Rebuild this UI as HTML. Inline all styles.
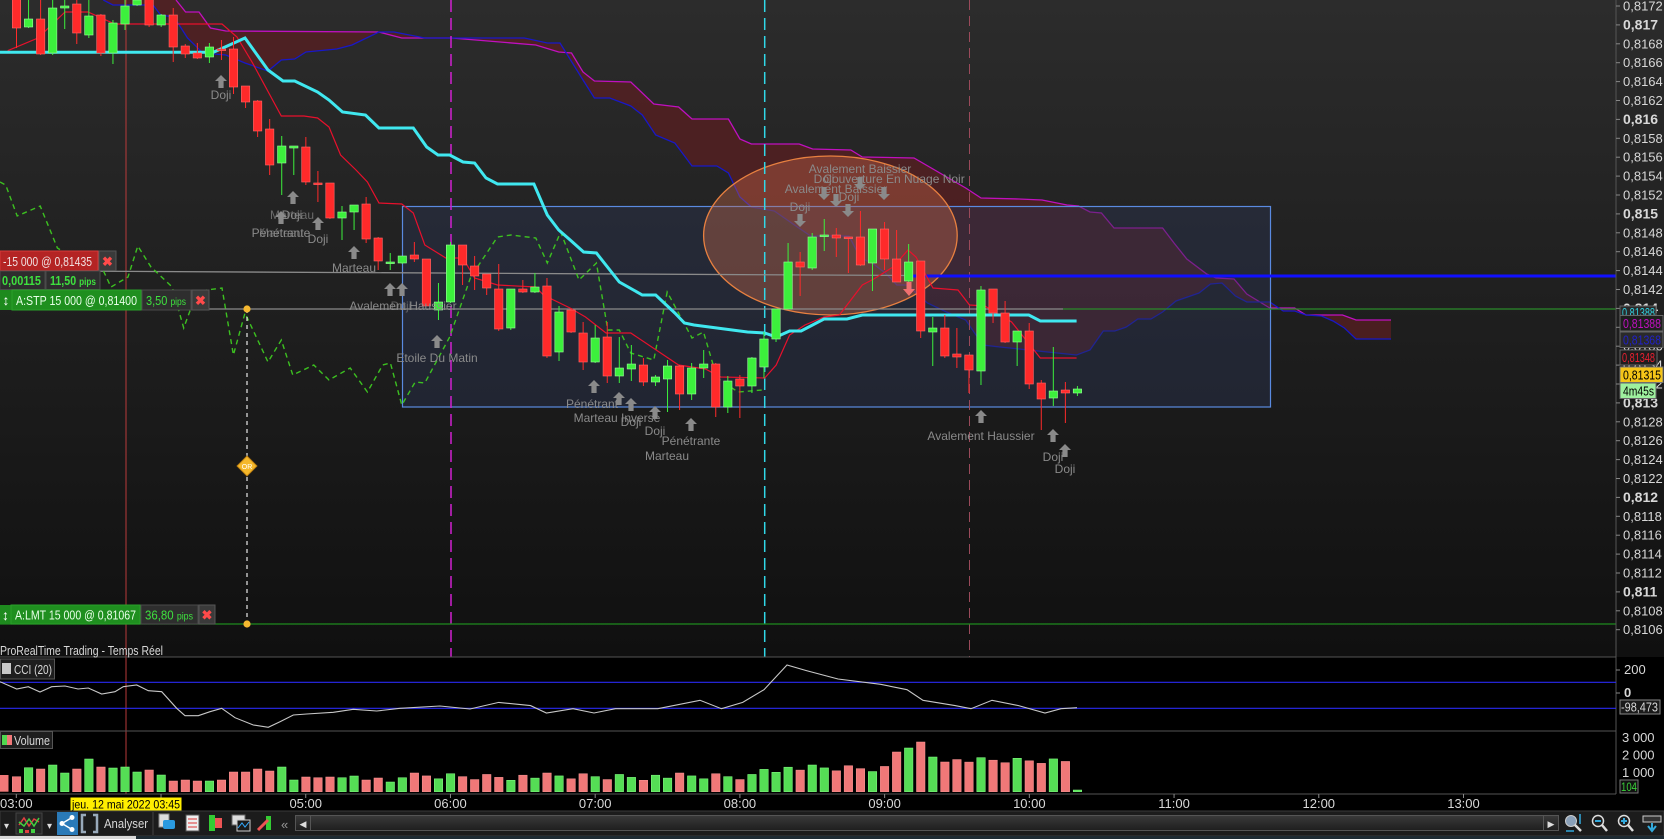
<!DOCTYPE html>
<html><head><meta charset="utf-8"><style>
html,body{margin:0;padding:0;background:#000;overflow:hidden}
svg{display:block}
text{font-family:"Liberation Sans",sans-serif}
</style></head><body>
<svg id="s" width="1664" height="839" viewBox="0 0 1664 839" xmlns="http://www.w3.org/2000/svg">
<defs>
<linearGradient id="bg" x1="0" y1="0" x2="0" y2="1"><stop offset="0" stop-color="#2c2c2c"/><stop offset="1" stop-color="#101010"/></linearGradient>
<linearGradient id="sb" x1="0" y1="0" x2="0" y2="1"><stop offset="0" stop-color="#3a3a3a"/><stop offset="1" stop-color="#1e1e1e"/></linearGradient>
<symbol id="au" viewBox="-7 0 14 14" overflow="visible"><path d="M0,0 L6,6 L2.6,6 L2.6,13 L-2.6,13 L-2.6,6 L-6,6 Z" fill="#8a8a8a"/></symbol>
<symbol id="ad" viewBox="-7 0 14 14" overflow="visible"><path d="M0,13 L6,7 L2.6,7 L2.6,0 L-2.6,0 L-2.6,7 L-6,7 Z" fill="#8a8a8a"/></symbol>
</defs>
<rect x="0" y="0" width="1664" height="657" fill="url(#bg)"/>
<rect x="0" y="657" width="1664" height="153" fill="#000"/>
<polygon id="cloud" fill="#5a1f22" fill-opacity="0.75" points=""/>
<polyline id="mag" fill="none" stroke="#c010c0" stroke-width="1.3" points=""/>
<polyline id="blu" fill="none" stroke="#1818c8" stroke-width="1.3" points=""/>
<rect x="402.5" y="206.5" width="868" height="200.5" fill="#2a3450" fill-opacity="0.45" stroke="#5a8ae0" stroke-width="1.2"/>
<ellipse cx="830.4" cy="235.5" rx="126.8" ry="79.5" fill="#c86a4a" fill-opacity="0.38" stroke="#e88040" stroke-width="1.3"/>
<line x1="126" y1="0" x2="126" y2="794" stroke="#b83a3a" stroke-width="1"/>
<line x1="451" y1="0" x2="451" y2="657" stroke="#d020d0" stroke-width="1.5" stroke-dasharray="12,6"/>
<line x1="764.7" y1="0" x2="764.7" y2="657" stroke="#30d8e8" stroke-width="1.5" stroke-dasharray="12,6"/>
<line x1="969.5" y1="0" x2="969.5" y2="657" stroke="#9a4a5a" stroke-width="1" stroke-dasharray="10,6"/>
<polyline points="0,270.7 909,275.5" stroke="#8a8a8a" stroke-width="1.3" fill="none"/>
<line x1="909" y1="276" x2="1616" y2="276" stroke="#1010ff" stroke-width="3"/>
<line x1="0" y1="309" x2="1063" y2="309" stroke="#8a8a8a" stroke-width="1.2"/>
<line x1="1063" y1="309" x2="1616" y2="309" stroke="#2a8a2a" stroke-width="1.2"/>
<line x1="0" y1="624" x2="1616" y2="624" stroke="#1f8a1f" stroke-width="1.2"/>
<polyline id="chik" fill="none" stroke="#3cc020" stroke-width="1.4" stroke-dasharray="5,4" points=""/>
<polyline id="ten" fill="none" stroke="#e8102c" stroke-width="1.2" points=""/>
<polyline id="kij" fill="none" stroke="#40e8f0" stroke-width="3" points=""/>
<g id="candles"></g>
<line x1="247" y1="309" x2="247" y2="624" stroke="#e8e8e8" stroke-width="1.2" stroke-dasharray="4,4"/>
<circle cx="247" cy="309" r="3.6" fill="#f5b830"/>
<circle cx="247" cy="624" r="3.6" fill="#f5b830"/>
<rect x="240" y="459" width="14" height="14" transform="rotate(45 247 466)" fill="#f5b82a" stroke="#c08010"/>
<text x="247" y="469" font-size="7" fill="#fff" text-anchor="middle">OR</text>
<g font-size="12" fill="#8a8a8a" text-anchor="middle">
<use href="#au" x="214" y="75" width="14" height="14"/><text x="221" y="99">Doji</text>
<use href="#au" x="286" y="191" width="14" height="14"/><text x="292" y="219">Doji</text><text x="292" y="219" fill-opacity="0.7">Marteau</text>
<use href="#au" x="274" y="211" width="14" height="14"/><text x="281" y="237">Pénétrante</text><text x="281" y="237" fill-opacity="0.6">Marteau</text>
<use href="#au" x="311" y="217" width="14" height="14"/><text x="318" y="243">Doji</text>
<use href="#au" x="347" y="246" width="14" height="14"/><text x="354" y="272">Marteau</text>
<use href="#au" x="383" y="283" width="14" height="14"/><use href="#au" x="395" y="283" width="14" height="14"/>
<text x="403" y="310">Avalement Haussier</text><text x="401" y="310" fill-opacity="0.6">Doji</text>
<use href="#au" x="430" y="335" width="14" height="14"/><text x="437" y="362">Etoile Du Matin</text>
<use href="#au" x="587" y="380" width="14" height="14"/><text x="592" y="408">Pénétrant</text>
<use href="#au" x="612" y="392" width="14" height="14"/><use href="#au" x="624" y="398" width="14" height="14"/>
<text x="617" y="422">Marteau Inverse</text><text x="631" y="426">Doji</text>
<use href="#au" x="648" y="406" width="14" height="14"/><text x="655" y="435">Doji</text>
<use href="#au" x="684" y="418" width="14" height="14"/><text x="691" y="445">Pénétrante</text>
<text x="667" y="460">Marteau</text>
<text x="860" y="173">Avalement Baissier</text>
<text x="824" y="183">Doji</text><text x="894" y="183">Couverture En Nuage Noir</text>
<text x="836" y="193">Avalement Baissier</text>
<text x="849" y="201">Doji</text><text x="800" y="211">Doji</text>
<use href="#ad" x="817" y="187" width="14" height="14"/>
<use href="#ad" x="829" y="194" width="14" height="14"/>
<use href="#ad" x="841" y="204" width="14" height="14"/>
<use href="#ad" x="853" y="177" width="14" height="14"/>
<use href="#ad" x="877" y="187" width="14" height="14"/>
<use href="#ad" x="793" y="214" width="14" height="14"/>
<path d="M909,296 L915,289 L911.5,289 L911.5,282 L906.5,282 L906.5,289 L903,289 Z" fill="#f07070"/>
<use href="#au" x="974" y="410" width="14" height="14"/><text x="981" y="440">Avalement Haussier</text>
<use href="#au" x="1046" y="429" width="14" height="14"/><text x="1053" y="461">Doji</text>
<use href="#au" x="1058" y="444" width="14" height="14"/><text x="1065" y="473">Doji</text>
</g>
<g font-size="13">
<rect x="0" y="251" width="98" height="19.5" fill="#b42424" stroke="#d83a3a"/>
<text x="3" y="266" fill="#f0e0e0" textLength="89" lengthAdjust="spacingAndGlyphs">-15 000 @ 0,81435</text>
<rect x="99" y="251" width="17" height="19.5" fill="#3a3a3a" stroke="#555"/>
<text x="107.5" y="266" fill="#ff4a4a" text-anchor="middle" font-weight="bold">✖</text>
<rect x="0" y="271" width="45" height="18.5" fill="#2e2e2e" stroke="#4a4a4a"/>
<text x="2" y="285" fill="#3ee03e" font-weight="bold" textLength="39" lengthAdjust="spacingAndGlyphs">0,00115</text>
<rect x="46" y="271" width="54" height="18.5" fill="#2e2e2e" stroke="#4a4a4a"/>
<text x="50" y="285" fill="#3ee03e" font-weight="bold" textLength="46" lengthAdjust="spacingAndGlyphs">11,50 <tspan font-size="10">pips</tspan></text>
<rect x="0" y="290" width="12" height="20" fill="#1e8a1e"/>
<text x="6" y="305" fill="#fff" text-anchor="middle" font-size="14">↕</text>
<rect x="12" y="290" width="129" height="20" fill="#1f8f1f" stroke="#2aa02a"/>
<text x="16" y="305" fill="#e8ffe8" textLength="121" lengthAdjust="spacingAndGlyphs">A:STP  15 000 @ 0,81400</text>
<rect x="142" y="290" width="49" height="20" fill="#2e2e2e" stroke="#4a4a4a"/>
<text x="146" y="305" fill="#3ee03e" textLength="40" lengthAdjust="spacingAndGlyphs">3,50 <tspan font-size="10">pips</tspan></text>
<rect x="192" y="290" width="17" height="20" fill="#3a3a3a" stroke="#555"/>
<text x="200.5" y="305" fill="#ff4a4a" text-anchor="middle" font-weight="bold">✖</text>
<rect x="0" y="605" width="11" height="19" fill="#1e8a1e"/>
<text x="5.5" y="620" fill="#fff" text-anchor="middle" font-size="14">↕</text>
<rect x="11" y="605" width="129" height="19" fill="#1f8f1f" stroke="#2aa02a"/>
<text x="15" y="619.5" fill="#e8ffe8" textLength="121" lengthAdjust="spacingAndGlyphs">A:LMT  15 000 @ 0,81067</text>
<rect x="141" y="605" width="57" height="19" fill="#2e2e2e" stroke="#4a4a4a"/>
<text x="145" y="619.5" fill="#3ee03e" textLength="48" lengthAdjust="spacingAndGlyphs">36,80 <tspan font-size="10">pips</tspan></text>
<rect x="199" y="605" width="16" height="19" fill="#3a3a3a" stroke="#555"/>
<text x="207" y="619.5" fill="#ff4a4a" text-anchor="middle" font-weight="bold">✖</text>
</g>
<line x1="1616" y1="0" x2="1616" y2="794" stroke="#555"/>
<g id="pax" font-size="13" fill="#d8d8d8"></g>
<g font-size="13">
<rect x="1620" y="306" width="36" height="14" fill="#2a2a2a" stroke="#666"/><text x="1622" y="317" fill="#30d0e0" textLength="33" lengthAdjust="spacingAndGlyphs">0,81388</text>
<rect x="1620" y="315.5" width="43" height="15.5" fill="#1e1e1e" stroke="#666"/><text x="1623" y="328" fill="#c010c0" textLength="38" lengthAdjust="spacingAndGlyphs">0,81388</text>
<rect x="1620" y="332" width="43" height="15.5" fill="#2a2a2a" stroke="#666"/><text x="1623" y="344.5" fill="#2020c8" textLength="38" lengthAdjust="spacingAndGlyphs">0,81368</text>
<rect x="1620" y="350" width="37" height="15" fill="#1e1e1e" stroke="#666"/><text x="1622" y="362" fill="#e82030" textLength="33" lengthAdjust="spacingAndGlyphs">0,81348</text>
<rect x="1620" y="367" width="43" height="15.5" fill="#f5c518" stroke="#777"/><text x="1623" y="379.5" fill="#000" textLength="38" lengthAdjust="spacingAndGlyphs">0,81315</text>
<rect x="1620" y="383" width="36" height="15.5" fill="#9ef09e" stroke="#666"/><text x="1623" y="395.5" fill="#000" textLength="31" lengthAdjust="spacingAndGlyphs">4m45s</text>
</g>
<line x1="0" y1="657" x2="1616" y2="657" stroke="#555"/>
<line x1="0" y1="731" x2="1616" y2="731" stroke="#555"/>
<line x1="0" y1="794" x2="1616" y2="794" stroke="#555"/>
<text x="0" y="655" font-size="13" fill="#d8d8d8" textLength="163" lengthAdjust="spacingAndGlyphs">ProRealTime Trading - Temps Réel</text>
<line x1="0" y1="682.3" x2="1616" y2="682.3" stroke="#2a2af0" stroke-width="1.2"/>
<line x1="0" y1="708.3" x2="1616" y2="708.3" stroke="#2a2af0" stroke-width="1.2"/>
<polyline fill="none" stroke="#c8c8c8" stroke-width="1.1" points="0,681.7 16.7,689 28.3,686.7 40,692 51.7,686.7 65,686 78,689 88.3,688 101.7,694 115,691.7 123.3,686.7 136.7,685 148.3,690.7 161.7,691.7 176.7,708.3 185,715.7 198.3,715.7 210,711.7 221.7,708.3 235,717.7 253.3,725 268.3,727.3 280,721.7 293.3,715 306.7,714 333.3,712.3 353.3,709.3 376.7,711 400,708.3 440,706 470,709 498.7,702.4 530.5,705.6 546.4,713 573,708.7 594,713 615.4,708.7 657.8,708.7 700,700.3 721.5,708.7 742.7,702.4 764,689.7 787,665 806.4,670.6 838,679 880.6,684.3 907,689.7 923,700.3 955,705.6 971,708.7 992,700.3 1018.6,705.6 1045,713 1061,708.7 1077,707.7"/>
<rect x="0.5" y="659" width="54" height="20" fill="#1e1e1e" stroke="#555"/>
<rect x="2" y="663" width="9" height="11" fill="#c8c8c8"/>
<text x="14" y="674" font-size="13" fill="#d8d8d8" textLength="38" lengthAdjust="spacingAndGlyphs">CCI (20)</text>
<g font-size="13" fill="#d8d8d8">
<line x1="1616" y1="670" x2="1620" y2="670" stroke="#888"/><text x="1624" y="674">200</text>
<line x1="1616" y1="693" x2="1620" y2="693" stroke="#888"/><text x="1624" y="697" font-weight="bold">0</text>
<rect x="1620" y="700" width="40" height="14" fill="#1a1a1a" stroke="#888"/><text x="1621" y="711.5" font-size="12.5" textLength="37" lengthAdjust="spacingAndGlyphs">-98,473</text>
<text x="1622" y="742">3 000</text><text x="1622" y="759.5">2 000</text><text x="1622" y="777">1 000</text>
<rect x="1620" y="780" width="18" height="13" fill="#111" stroke="#777"/><text x="1621" y="791" font-size="11.5" fill="#3ad03a" textLength="16" lengthAdjust="spacingAndGlyphs">104</text>
</g>
<g id="vol"></g>
<rect x="0.5" y="731.5" width="52" height="17" fill="#1e1e1e" stroke="#555"/>
<rect x="2" y="735" width="5" height="10" fill="#50d850"/><rect x="7" y="735" width="5" height="10" fill="#f07878"/>
<text x="14" y="745" font-size="13" fill="#d8d8d8" textLength="36" lengthAdjust="spacingAndGlyphs">Volume</text>
<g font-size="13" fill="#d8d8d8" text-anchor="middle" id="tax"></g>
<rect x="70.5" y="797.5" width="111" height="13" fill="#ffee00"/>
<text x="72" y="808.5" font-size="12" fill="#000" textLength="108" lengthAdjust="spacingAndGlyphs">jeu. 12 mai 2022 03:45</text>
<rect x="0" y="811" width="1664" height="25" fill="#1c1c1c" stroke="#3a3a3a"/>
<rect x="0" y="836" width="136" height="3" fill="#d8d8d8"/><rect x="136" y="836" width="1528" height="3" fill="#1e2b33"/>
<text x="4" y="829" font-size="10" fill="#ddd">▾</text>
<rect x="16" y="813" width="26" height="21" fill="#262626" stroke="#444"/>
<polyline points="19,825 24,818 29,826 34,819 39,822" stroke="#e04040" fill="none" stroke-width="1.5"/>
<polyline points="19,822 24,826 29,819 34,826 39,818" stroke="#40d040" fill="none" stroke-width="1.5"/>
<rect x="19" y="829" width="4" height="4" fill="#40d040"/><rect x="25" y="830" width="4" height="3" fill="#e04040"/><rect x="31" y="829" width="4" height="4" fill="#40d040"/>
<text x="47" y="829" font-size="10" fill="#ddd">▾</text>
<rect x="57" y="812" width="21" height="23" fill="#2a7ab8"/>
<circle cx="62" cy="823.5" r="2.5" fill="#fff"/><circle cx="72" cy="817.5" r="2.5" fill="#fff"/><circle cx="72" cy="829.5" r="2.5" fill="#fff"/>
<path d="M62,823.5 L72,817.5 M62,823.5 L72,829.5" stroke="#fff" stroke-width="1.4"/>
<path d="M86,815 L82,815 L82,832 L86,832 M93,815 L97,815 L97,832 L93,832" stroke="#9ab" stroke-width="2.5" fill="none"/>
<text x="104" y="828" font-size="13" fill="#d8d8d8" textLength="44" lengthAdjust="spacingAndGlyphs">Analyser</text>
<line x1="153" y1="812" x2="153" y2="835" stroke="#444"/>
<rect x="159" y="814" width="10" height="13" fill="#ddd" stroke="#888"/><rect x="163" y="820" width="12" height="9" rx="2" fill="#2a9ae0"/>
<rect x="186" y="815" width="13" height="16" fill="#eee" stroke="#555"/><path d="M188,819 L197,819 M188,823 L197,823 M188,827 L197,827" stroke="#d33"/>
<rect x="209" y="815" width="6" height="16" fill="#3c3"/><rect x="215" y="818" width="7" height="10" fill="#e55"/>
<rect x="232" y="815" width="13" height="10" fill="#ddd" stroke="#666"/><rect x="237" y="820" width="13" height="11" fill="#1a1a1a" stroke="#ccc"/><polyline points="238,828 242,823 245,827 249,822" stroke="#3af" fill="none"/>
<rect x="266" y="816" width="5" height="14" fill="#3c3"/><path d="M258,830 L268,820" stroke="#e55" stroke-width="3"/>
<text x="281" y="829" font-size="13" fill="#999">«</text>
<rect x="295.5" y="815.5" width="15" height="15" fill="url(#sb)" stroke="#555"/><text x="303" y="827" font-size="9" fill="#ddd" text-anchor="middle">◀</text>
<rect x="310.5" y="815.5" width="1233" height="15" fill="url(#sb)" stroke="#555"/>
<rect x="1543.5" y="815.5" width="15" height="15" fill="url(#sb)" stroke="#555"/><text x="1551" y="827" font-size="9" fill="#ddd" text-anchor="middle">▶</text>
<circle cx="1571" cy="821" r="5.5" fill="#8aa0b8" stroke="#ccc"/><path d="M1575,825 L1581,831" stroke="#ddd" stroke-width="2.5"/><path d="M1580,814 L1580,824 M1566,831 L1574,831" stroke="#3ad" stroke-width="1.5"/>
<circle cx="1598" cy="821" r="5.5" fill="none" stroke="#ddd" stroke-width="1.5"/><path d="M1602,825 L1607,831" stroke="#ddd" stroke-width="2.5"/><rect x="1595" y="820" width="6" height="2" fill="#3ad"/>
<circle cx="1624" cy="821" r="5.5" fill="none" stroke="#ddd" stroke-width="1.5"/><path d="M1628,825 L1633,831" stroke="#ddd" stroke-width="2.5"/><path d="M1621,821 L1627,821 M1624,818 L1624,824" stroke="#3ad" stroke-width="2"/>
<rect x="1643" y="816" width="18" height="6" fill="#333" stroke="#ccc"/><path d="M1652,823 L1652,829 M1648,826 L1652,831 L1656,826" stroke="#3ad" stroke-width="2" fill="none"/>
</svg>
<script>
(function(){
function P(a){return a.map(function(p){return p[0]+","+p[1];}).join(" ");}
var mag=[[176,0],[185.6,12],[199,12],[210.5,28],[225.8,31],[378.9,32],[401.8,38],[451.6,38],[535.8,45],[558.7,52],[571.5,53],[583,72],[594.4,81],[630.8,82],[653.8,104],[678.6,107],[692,119],[728.4,119],[739.9,139],[751.4,144],[799.2,144],[812.6,149],[850.8,150],[862.3,157],[914,158],[965.7,188],[981,198],[1019,199],[1042,200],[1067,205],[1078.5,206],[1090,212],[1101.4,213],[1114,228],[1162.6,228],[1174,243],[1186.8,259],[1206.7,274],[1216,278],[1234,279],[1246.8,294],[1269.8,308],[1294.7,308],[1306,315],[1342.5,315],[1356,320],[1391,320]];
var blu=[[103.3,0],[112.9,5],[153,5],[160.7,15],[174,17],[187.5,38],[202.8,53],[225.8,55],[245,63],[268,71],[281.3,60],[294.7,59],[306,52],[336.8,49],[352,45],[378.9,32],[394,32],[424.8,38],[524.3,38],[547.3,43],[560,43],[583,80],[594.4,98],[609.8,98],[630.8,106],[642.3,115],[655.7,135],[674.8,143],[692,166],[716.9,166],[728.4,173],[739.9,197],[751.4,207],[774.3,211],[797.3,227],[810.7,236],[849,236],[860.4,258],[872,263],[885.3,273],[896.8,285],[908.3,285],[916,293],[927.4,303],[946.5,312],[965.7,320],[982.9,345],[1000,347],[1076.5,355],[1090,350],[1103.3,331],[1114.8,331],[1126.3,327],[1137.8,319],[1151,319],[1162.6,312],[1176,301],[1199,293],[1210.5,284],[1222,283],[1235.4,296],[1246.8,302],[1269.8,302],[1283.2,311],[1294.7,311],[1306,315],[1321.5,316],[1333,321],[1344.4,328],[1356,339],[1391,339]];
document.getElementById("mag").setAttribute("points",P(mag));
document.getElementById("blu").setAttribute("points",P(blu));
document.getElementById("cloud").setAttribute("points",P(mag.concat(blu.slice().reverse())));
var kij=[[0,52.3],[206.7,52.3],[214,52],[245,38],[268,70],[283,81],[294.7,81],[317.6,92],[329,100],[342.5,112],[365.5,115],[378.9,128],[413.3,128],[426.7,147],[438,155],[449.7,155],[463,162],[474.6,163],[486,178],[497.5,184],[533.9,184],[547.3,215],[558.7,230],[570.2,240],[583.6,252],[596.4,253],[619.3,282],[642.3,295],[655.7,295],[674.8,313],[684.4,323],[694,325],[747.5,332],[764.7,333],[776.2,337],[789.6,331],[801.1,331],[824,319],[847,319],[862.3,315],[1028.8,315],[1040.3,321],[1076.6,321]];
document.getElementById("kij").setAttribute("points",P(kij));
var ten=[[7.7,50.7],[38,38],[65,12],[88,12],[114.8,24],[222,24],[237,37],[252.6,63],[281.3,116],[304,116],[317.6,118],[329,127],[340.6,155],[356,170],[367.4,182],[379,203],[401.8,204],[413.3,213],[424.8,245],[445.8,258],[463,258],[474.6,278],[497.5,285],[535.8,287],[543.4,295],[570,308],[585.5,317],[606,333],[630.8,333],[678.6,365],[705.4,369],[720.7,377],[764.7,378],[776.2,365],[789.6,335],[805,325],[824,317],[839.4,315],[862.3,285],[873.8,279],[893,267],[908,250],[916,257],[933,288],[958,290],[969.5,305],[984.8,306],[1011.6,322],[1040.3,358],[1076.6,358]];
document.getElementById("ten").setAttribute("points",P(ten));
var chik=[[0,182],[5.7,185],[17.2,216],[40.2,206],[57.4,248],[80,262],[103,270],[111,287],[128,277],[137.8,246],[151,267],[172.2,287],[183.7,328],[191.4,307],[206.7,290],[222,288],[233.4,355],[245,313],[268,362],[281.3,340],[292.8,375],[313.8,365],[329,380],[350.2,368],[367.4,392],[382.7,365],[390.4,363],[401.8,405],[415.2,382],[424.8,383],[449.7,337],[470.7,277],[497.5,237],[510.9,235],[535.8,238],[547.3,263],[560.7,232],[579,280],[596.4,263],[607.8,330],[619.3,330],[630.8,353],[653.8,360],[667.2,292],[692,338],[703.5,332],[717,378],[738,392],[762.8,390]];
document.getElementById("chik").setAttribute("points",P(chik));
var C=[[-5,28,-10,48],[27,19,0,28],[19,54,0,55],[53,8,0,55],[8,6,0,29],[4,33,0,44],[35,16,0,38],[15,53,14,56],[53,23,20,64],[24,6,0,30],[5,0,-5,6],[-3,25,-5,27],[25,15,14,27],[15,47,8,62],[46,54,44,58],[53,58,43,59],[57,47,43,63],[49,50,40,60],[49,87,37,94],[86,102,86,108],[101,131,100,137],[129,165,119,175],[163,146,136,195],[148,146,146,175],[147,182,137,185],[183,184,171,202],[183,218,183,219],[218,212,206,240],[212,205,205,230],[204,239,197,243],[238,261,237,270],[263,262,253,270],[263,256,256,264],[255,259,242,262],[259,306,259,306],[310,302,283,320],[302,245,242,303],[245,265,245,285],[266,276,256,290],[274,288,274,295],[289,329,264,331],[328,289,289,330],[289,292,280,293],[292,287,273,293],[286,356,278,358],[352,312,306,361],[310,332,308,333],[333,362,322,370],[362,338,325,363],[337,376,322,383],[376,368,337,383],[369,364,345,381],[365,382,358,386],[382,377,375,386],[379,366,360,412],[366,394,365,410],[394,368,363,400],[368,364,350,378],[364,407,363,417],[407,381,376,413],[379,386,375,418],[386,358,357,393],[367,339,332,378],[339,309,309,342],[309,262,243,309],[262,267,252,296],[268,237,233,270],[236,235,219,251],[235,238,228,257],[237,238,237,273],[237,265,211,266],[263,229,229,291],[229,259,222,270],[259,282,230,282],[281,262,244,282],[261,331,261,338],[332,328,317,366],[328,356,315,358],[354,357,328,368],[355,370,355,393],[371,290,286,385],[289,313,289,323],[313,342,301,343],[342,331,331,366],[331,384,323,389],[383,399,380,430],[398,391,347,406],[390,393,382,423],[393,389,386,396]];
var vt=[776.7,767.7,769,765,773,769,759,767,768,767,772,770,775,781,780,781,781,780,772,772,769,771,767,780,777,777.7,777,777.7,776,780,778,782,777.7];
var g="",v="";
v+='<rect x="0" y="775" width="8.5" height="16.7" fill="#f07878"/>';
for(var i=0;i<C.length;i++){
 var c=C[i],x=16.5+12.056*i,o=c[0],cl=c[1],h=c[2],l=c[3];
 var up=cl<o,col=up?"#3cf03c":"#ff2a2a",bd=up?"#9aff9a":"#ff6a6a";
 var top=Math.min(o,cl),bh=Math.max(Math.abs(o-cl),1.6);
 g+='<line x1="'+x+'" y1="'+h+'" x2="'+x+'" y2="'+l+'" stroke="'+col+'" stroke-width="1"/>';
 g+='<rect x="'+(x-4.2)+'" y="'+top+'" width="8.4" height="'+bh+'" fill="'+col+'" stroke="'+bd+'" stroke-width="0.6"/>';
 var t;
 if(i<vt.length)t=vt[i];else{
  var n=((i*37)%11)/11;
  if(i<62)t=773+n*8;else if(i<73)t=765+n*8;else if(i<78)t=[752,748,742,757,762][i-73];else if(i<88)t=757+n*7;else t=790;
 }
 var vc=up?"#55dd55":"#f07878";
 v+='<rect x="'+(x-4.2)+'" y="'+t+'" width="8.5" height="'+(791.7-t)+'" fill="'+vc+'" stroke="'+(up?"#8f8":"#f99")+'" stroke-width="0.5"/>';
}
document.getElementById("candles").innerHTML=g;
document.getElementById("vol").innerHTML=v;
var pa="";
for(var k=0;k<=33;k++){
 var p=8172-2*k,y=6+k*18.9,s=(p/10000).toFixed(4).replace(".",",");
 var b=(p%10===0);if(b)s=s.replace(/0$/,"");
 pa+='<line x1="1616" y1="'+y+'" x2="1620" y2="'+y+'" stroke="#888"/>';
 pa+='<text x="1623" y="'+(y+4.5)+'"'+(b?' font-weight="bold" font-size="14"':'')+'>'+s+'</text>';
}
document.getElementById("pax").innerHTML=pa;
var ta="",hs=["03:00","04:00","05:00","06:00","07:00","08:00","09:00","10:00","11:00","12:00","13:00"];
for(var j=0;j<hs.length;j++){var x=16.3+144.72*j;
 ta+='<line x1="'+x+'" y1="794" x2="'+x+'" y2="798" stroke="#888"/>';
 if(j!==1)ta+='<text x="'+x+'" y="808">'+hs[j]+'</text>';}
document.getElementById("tax").innerHTML=ta;
})();
</script>
</body></html>
